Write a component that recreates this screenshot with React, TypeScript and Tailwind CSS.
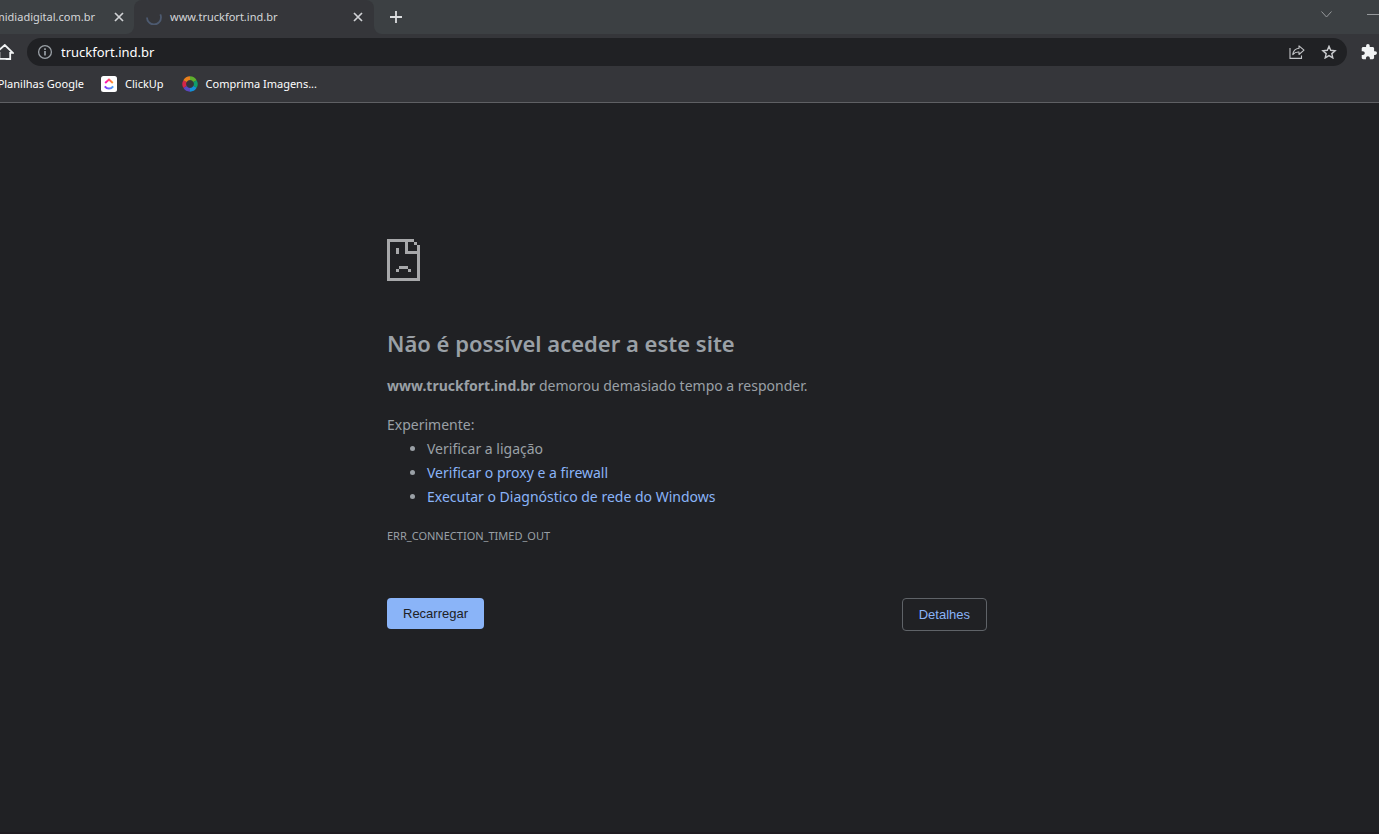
import React from "react";

const FACE = [
  "#########",
  "#.....#..#",
  "#.....#...#",
  "#..#..#...#",
  "#..#..#####",
  "#.........#",
  "#.........#",
  "#.........#",
  "#.........#",
  "#...###...#",
  "#..#...#..#",
  "#.........#",
  "#.........#",
  "###########",
];

function SadFileIcon() {
  return (
    <svg width="33" height="42" viewBox="0 0 11 14" shapeRendering="crispEdges" fill="#a7a8aa" aria-hidden="true">
      {FACE.flatMap((row, y) =>
        row.split("").map((cell, x) => (cell === "#" ? <rect key={`${x}-${y}`} x={x} y={y} width="1" height="1" /> : null)),
      )}
    </svg>
  );
}

function CloseIcon() {
  return (
    <svg width="10" height="10" viewBox="0 0 10 10" stroke="#d0d2d5" strokeWidth="1.7" aria-hidden="true">
      <path d="M1 1l8 8M9 1l-8 8" />
    </svg>
  );
}

function TabStrip() {
  return (
    <header className="flex h-[34px] bg-[#35363a] text-[11px] text-[#d4d6d9]">
      <div className="flex w-[134px] shrink-0 items-center justify-end gap-[19px] overflow-hidden rounded-br-lg bg-[#3c4043] pr-2.5">
        <span className="whitespace-nowrap">midiadigital.com.br</span>
        <button aria-label="Fechar separador" className="shrink-0">
          <CloseIcon />
        </button>
      </div>
      <div className="flex w-[240px] shrink-0 bg-linear-to-b from-[#3c4043] from-50% to-[#35363a] to-50%">
        <div className="flex w-full items-center rounded-t-lg bg-[#35363a] pl-3 pr-[11px]">
          <svg width="16" height="16" viewBox="0 0 16 16" fill="none" stroke="#4d5a70" strokeWidth="1.8" aria-hidden="true">
            <path d="M1 8.500a7 7 0 0 0 14 0c0-1.200-.2-2.200-.7-3.200" />
          </svg>
          <span className="ml-2 flex-1">www.truckfort.ind.br</span>
          <button aria-label="Fechar separador">
            <CloseIcon />
          </button>
        </div>
      </div>
      <div className="flex flex-1 overflow-hidden rounded-bl-lg bg-[#3c4043]">
        <button aria-label="Novo separador" className="px-4">
          <svg width="12" height="12" viewBox="0 0 12 12" stroke="#dcdee0" strokeWidth="1.800" aria-hidden="true">
            <path d="M6 0v12M0 6h12" />
          </svg>
        </button>
        <div className="flex flex-1 items-start justify-end gap-[35px]">
          <button aria-label="Pesquisar separadores" className="pt-[11px]">
            <svg width="11" height="7" viewBox="0 0 11 7" fill="none" stroke="#96999c" aria-hidden="true">
              <path d="M.5.5l5 5.500 5-5.500" />
            </svg>
          </button>
          <button aria-label="Minimizar" className="pt-[14px]">
            <svg width="12" height="1" viewBox="0 0 12 1" fill="#96999c" aria-hidden="true">
              <path d="M0 0h12v1H0z" />
            </svg>
          </button>
        </div>
      </div>
    </header>
  );
}

function Toolbar() {
  return (
    <div className="flex h-9 items-center bg-[#35363a]">
      <button aria-label="Página inicial" className="flex w-[27px] shrink-0 overflow-hidden">
        <svg width="14" height="16" viewBox="0 0 14 16" fill="none" stroke="#f1f3f4" strokeWidth="1.800" aria-hidden="true">
          <path d="M-4 8.800L4.800 1l8 7.800H10.200V15H6.600V14.900H-.6V8.800z" />
        </svg>
      </button>
      <div className="flex h-7 min-w-0 flex-1 items-center rounded-full bg-[#202124] px-2.5">
        <svg width="16" height="16" viewBox="-1 -1 16 16" fill="none" stroke="#9aa0a6" strokeWidth="1.300" aria-hidden="true">
          <circle cx="7" cy="7" r="6.400" />
          <path d="M7 6v4.500M7 3.300v1.700" strokeWidth="1.700" />
        </svg>
        <input
          aria-label="Endereço"
          defaultValue="truckfort.ind.br"
          className="ml-2 min-w-0 flex-1 bg-transparent pt-px text-[13px] text-white outline-none"
        />
        <button aria-label="Partilhar">
          <svg width="16" height="14" viewBox="0 0 16 14" fill="none" stroke="#c3c5c8" strokeWidth="1.100" aria-hidden="true">
            <path d="M1 3v10.400h11.500V10.500" />
            <path d="M10 .9l5 4.300-5 4.300V7C7.200 6.800 5.500 7.500 3.800 9.600 4.200 6 6.300 3.700 10 3.300z" strokeLinejoin="round" />
          </svg>
        </button>
        <button aria-label="Adicionar aos marcadores" className="ml-4">
          <svg width="16" height="14" viewBox="0 0 16 14" fill="none" stroke="#c9cbce" strokeWidth="1.400" aria-hidden="true">
            <path d="M8 1.300l1.700 4 4.400.4-3.300 2.900 1 4.300L8 10.600l-3.800 2.300 1-4.300-3.300-2.900 4.400-.4z" />
          </svg>
        </button>
      </div>
      <button aria-label="Extensões" className="flex w-8 shrink-0 pl-3.5">
        <svg width="16" height="16" viewBox="1 1 22 22" fill="#f1f3f4" aria-hidden="true">
          <path d="M20.500 11H19V7c0-1.100-.9-2-2-2h-4V3.500a2.500 2.500 0 0 0-5 0V5H4c-1.100 0-2 .9-2 2v3.800h1.500c1.500 0 2.700 1.200 2.700 2.700S5 16.200 3.500 16.200H2V20c0 1.100.9 2 2 2h3.800v-1.500c0-1.500 1.200-2.700 2.700-2.700s2.700 1.200 2.700 2.700V22H17c1.100 0 2-.9 2-2v-4h1.500a2.500 2.500 0 0 0 0-5z" />
        </svg>
      </button>
    </div>
  );
}

function Bookmarks() {
  return (
    <nav aria-label="Marcadores" className="flex h-[33px] items-center border-b border-[#5f6064] bg-[#35363a] pb-1 text-[11px] text-white">
      <a href="#planilhas" className="flex w-[84px] shrink-0 justify-end overflow-hidden whitespace-nowrap">
        Planilhas Google
      </a>
      <a href="#clickup" className="ml-[17px] flex items-center gap-2">
        <svg width="16" height="16" viewBox="0 0 16 16" fill="none" strokeWidth="2" aria-hidden="true">
          <defs>
            <linearGradient id="cuTop" x1="0" x2="1">
              <stop stopColor="#ff02c0" />
              <stop offset="1" stopColor="#ff9d20" />
            </linearGradient>
            <linearGradient id="cuBottom" x1="0" x2="1">
              <stop stopColor="#8930fd" />
              <stop offset="1" stopColor="#49a8f9" />
            </linearGradient>
          </defs>
          <rect width="16" height="16" rx="2.500" fill="#fff" />
          <path d="M4.200 7L8 3.600 11.800 7" stroke="url(#cuTop)" />
          <path d="M3.800 10.300c2.300 3 6.100 3 8.400 0" stroke="url(#cuBottom)" />
        </svg>
        ClickUp
      </a>
      <a href="#comprima" className="ml-[18px] flex items-center gap-2">
        <svg width="16" height="16" viewBox="-8 -8 16 16" fill="none" strokeWidth="3.800" aria-hidden="true">
          <path d="M0-5.800A5.800 5.800 0 0 1 5-2.900" stroke="#5fae2c" />
          <path d="M5-2.900A5.800 5.800 0 0 1 5 2.900" stroke="#0f9d6a" />
          <path d="M5 2.900A5.800 5.800 0 0 1 0 5.800" stroke="#1590d8" />
          <path d="M0 5.800A5.800 5.800 0 0 1-5 2.900" stroke="#5a48c0" />
          <path d="M-5 2.900A5.800 5.800 0 0 1-5-2.900" stroke="#d62548" />
          <path d="M-5-2.900A5.800 5.800 0 0 1 0-5.800" stroke="#e8801c" />
        </svg>
        Comprima Imagens...
      </a>
    </nav>
  );
}

export default function App() {
  return (
    <div className="flex min-h-screen flex-col overflow-hidden bg-[#202124] font-['Noto_Sans','Open_Sans',sans-serif]">
      <TabStrip />
      <Toolbar />
      <Bookmarks />
      <main className="flex-1 border-b-2 border-[#1e1b20] pl-6 pr-[29px] pt-[136px] text-[14px] leading-6 text-[#9aa0a6]">
        <div className="mx-auto w-full max-w-[600px]">
          <SadFileIcon />
          <h1 className="mt-[46px] text-[22px] font-semibold leading-8">Não é possível aceder a este site</h1>
          <p className="mt-[15px]">
            <strong>www.truckfort.ind.br</strong> demorou demasiado tempo a responder.
          </p>
          <p className="mt-[15px]">Experimente:</p>
          <ul className="list-disc pl-10">
            <li>Verificar a ligação</li>
            <li>
              <a href="#proxy" className="text-[#8ab4f8]">Verificar o proxy e a firewall</a>
            </li>
            <li>
              <a href="#diagnostico" className="text-[#8ab4f8]">Executar o Diagnóstico de rede do Windows</a>
            </li>
          </ul>
          <p className="mt-[15px] text-[11px] leading-6">ERR_CONNECTION_TIMED_OUT</p>
          <div className="mt-[50px] flex items-start justify-between font-['Liberation_Sans',Arial,sans-serif] text-[13px]">
            <button className="h-[31px] rounded bg-[#8ab4f8] px-4 text-[#202124]">Recarregar</button>
            <button className="h-[33px] rounded border border-[#5f6368] px-4 text-[#8ab4f8]">Detalhes</button>
          </div>
        </div>
      </main>
    </div>
  );
}
